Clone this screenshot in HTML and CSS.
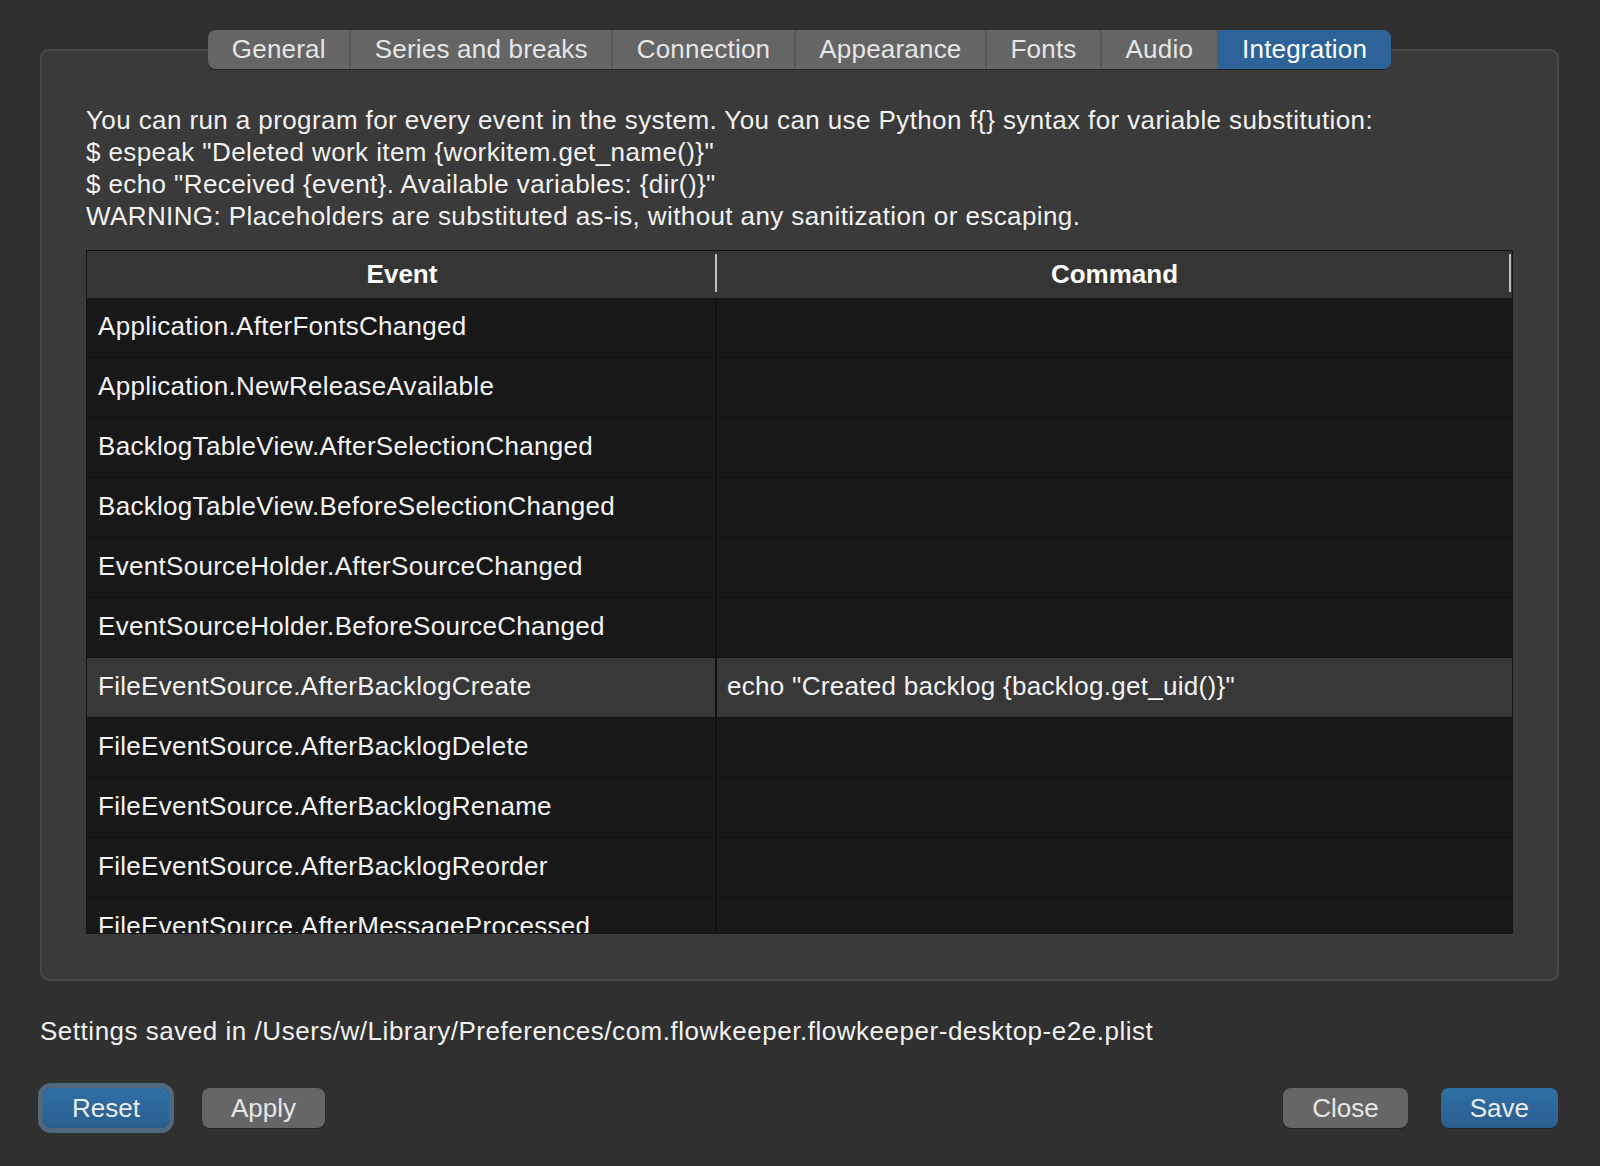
FILE: index.html
```html
<!DOCTYPE html>
<html>
<head>
<meta charset="utf-8">
<link rel="stylesheet" href="styles.css">
</head>
<body>
<div class="dialog">
  <div class="tabs">
    <div class="tabbar">
      <div class="tab">General</div>
      <div class="tab">Series and breaks</div>
      <div class="tab">Connection</div>
      <div class="tab">Appearance</div>
      <div class="tab">Fonts</div>
      <div class="tab">Audio</div>
      <div class="tab active">Integration</div>
    </div>
    <div class="panel">
      <div class="desc">
        <div>You can run a program for every event in the system. You can use Python f{} syntax for variable substitution:</div>
        <div>$ espeak "Deleted work item {workitem.get_name()}"</div>
        <div>$ echo "Received {event}. Available variables: {dir()}"</div>
        <div>WARNING: Placeholders are substituted as-is, without any sanitization or escaping.</div>
      </div>
      <div class="table">
        <div class="thead">
          <div class="th">Event</div>
          <div class="th">Command</div>
        </div>
        <div class="tbody">
          <div class="tr"><div class="td">Application.AfterFontsChanged</div><div class="td"></div></div>
          <div class="tr"><div class="td">Application.NewReleaseAvailable</div><div class="td"></div></div>
          <div class="tr"><div class="td">BacklogTableView.AfterSelectionChanged</div><div class="td"></div></div>
          <div class="tr"><div class="td">BacklogTableView.BeforeSelectionChanged</div><div class="td"></div></div>
          <div class="tr"><div class="td">EventSourceHolder.AfterSourceChanged</div><div class="td"></div></div>
          <div class="tr"><div class="td">EventSourceHolder.BeforeSourceChanged</div><div class="td"></div></div>
          <div class="tr sel"><div class="td">FileEventSource.AfterBacklogCreate</div><div class="td">echo "Created backlog {backlog.get_uid()}"</div></div>
          <div class="tr"><div class="td">FileEventSource.AfterBacklogDelete</div><div class="td"></div></div>
          <div class="tr"><div class="td">FileEventSource.AfterBacklogRename</div><div class="td"></div></div>
          <div class="tr"><div class="td">FileEventSource.AfterBacklogReorder</div><div class="td"></div></div>
          <div class="tr"><div class="td">FileEventSource.AfterMessageProcessed</div><div class="td"></div></div>
        </div>
      </div>
    </div>
  </div>
  <div class="status">Settings saved in /Users/w/Library/Preferences/com.flowkeeper.flowkeeper-desktop-e2e.plist</div>
  <div class="buttons">
    <div class="group">
      <button class="btn primary focus">Reset</button>
      <button class="btn">Apply</button>
    </div>
    <div class="group">
      <button class="btn">Close</button>
      <button class="btn primary">Save</button>
    </div>
  </div>
</div>
</body>
</html>
```
FILE: styles.css
```css
html, body {
  margin: 0;
  padding: 0;
}
body {
  width: 1600px;
  height: 1166px;
  overflow: hidden;
  background: #303030;
  font-family: "Liberation Sans", Arial, sans-serif;
  color: #f0f0f0;
}
.dialog {
  padding-top: 30px;
}
.tabs {
  margin: 0 41px 0 40px;
}
.tabbar {
  position: relative;
  z-index: 1;
  display: flex;
  width: fit-content;
  margin: 0 auto -20px auto;
  height: 39px;
  border-radius: 8px;
  overflow: hidden;
  background: #656565;
  box-shadow: 0 1px 1px rgba(0,0,0,0.35);
}
.tab {
  padding: 0 23.5px;
  line-height: 39px;
  font-size: 26px;
  letter-spacing: 0.2px;
  color: #e6e6e6;
  border-left: 2px solid #575757;
  white-space: nowrap;
}
.tab:first-child {
  border-left: none;
}
.tab.active {
  background: #2d6399;
  color: #ffffff;
  border-left-color: #2d6399;
}
.panel {
  background: #3a3a3a;
  border: 2px solid #484848;
  border-radius: 9px;
  padding: 53px 44px 45px 44px;
}
.desc {
  font-size: 26px;
  line-height: 32px;
  letter-spacing: 0.4px;
  color: #f2f2f2;
  margin-bottom: 18px;
  white-space: nowrap;
}
.table {
  box-sizing: border-box;
  height: 684px;
  border: 1px solid #141414;
  background: #181818;
  overflow: hidden;
}
.thead {
  display: grid;
  grid-template-columns: 630px 1fr;
  height: 47px;
  background: #353535;
}
.th {
  position: relative;
  text-align: center;
  font-weight: bold;
  font-size: 26px;
  line-height: 46px;
  color: #ffffff;
}
.th::after {
  content: "";
  position: absolute;
  right: 0;
  top: 3px;
  bottom: 6px;
  width: 2px;
  background: #bdbdbd;
}
.th:last-child::after {
  right: 1px;
}
.tr {
  display: grid;
  grid-template-columns: 630px 1fr;
  box-sizing: border-box;
  height: 60px;
  border-bottom: 1px solid #121212;
}
.tr.sel {
  background: #383838;
}
.td {
  font-size: 26px;
  line-height: 56px;
  letter-spacing: 0.3px;
  color: #f4f4f4;
  white-space: nowrap;
  padding-left: 10px;
}
.td:first-child {
  padding-left: 11px;
  border-right: 2px solid #101010;
}
.status {
  margin: 34px 0 0 40px;
  font-size: 26px;
  line-height: 32px;
  letter-spacing: 0.52px;
  color: #f2f2f2;
}
.buttons {
  display: flex;
  justify-content: space-between;
  margin-top: 41px;
  padding: 0 42px 0 43px;
}
.group {
  display: flex;
  gap: 33px;
}
.btn {
  height: 40px;
  padding: 0 29px;
  border: none;
  border-radius: 8px;
  background: #666666;
  color: #e6e6e6;
  font-family: "Liberation Sans", Arial, sans-serif;
  font-size: 26px;
  box-shadow: 0 1px 1px rgba(0,0,0,0.3);
}
.btn.primary {
  background: linear-gradient(#3070a6, #2a5d8f);
  color: #ececec;
}
.btn.focus {
  box-shadow: 0 0 0 5px #4f6880;
}
```
